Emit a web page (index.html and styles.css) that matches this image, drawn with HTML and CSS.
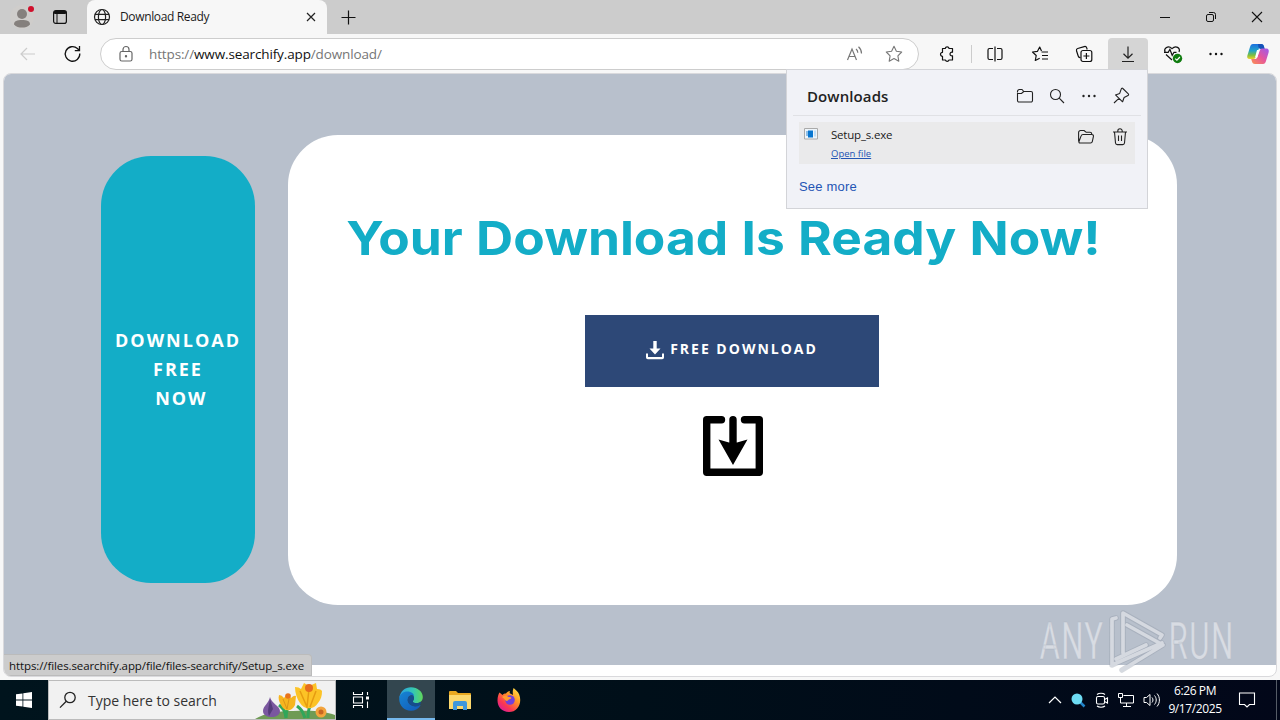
FILE: index.html
```html
<!DOCTYPE html>
<html lang="en">
<head>
<meta charset="utf-8">
<title>Download Ready</title>
<link rel="stylesheet" href="styles.css">
</head>
<body>
<div class="screen">
  <header class="tabstrip">
    <svg class="avatar" width="26" height="26" viewBox="0 0 26 26"><circle cx="13" cy="13" r="12" fill="#cfcdcb"/><circle cx="13" cy="10" r="5" fill="#85807d"/><path d="M5 20.500c0-3.500 3-4.500 8-4.500s8 1 8 4.500c-2 2.500-5 3-8 3s-6-.5-8-3z" fill="#85807d"/><circle cx="22" cy="5" r="3" fill="#d0102c"/></svg>
    <svg class="tabmenu" width="16" height="16" viewBox="0 0 16 16"><rect x="1.600" y="1.600" width="12.800" height="12.800" rx="2.200" fill="none" stroke="#111" stroke-width="1.200"/><path d="M2.500 2.500h11v2h-11zM5 5v9" stroke="#111" fill="#111"/></svg>
    <div class="tab">
      <svg width="18" height="18" viewBox="0 0 18 18" fill="none" stroke="#222" stroke-width="1.200"><circle cx="9" cy="9" r="7.500"/><ellipse cx="9" cy="9" rx="3.600" ry="7.500"/><path d="M2 6.300h14M2 11.700h14"/></svg>
      <span class="tab-title">Download Ready</span>
      <svg class="tab-close" width="10" height="10" viewBox="0 0 10 10" stroke="#222" stroke-width="1.200"><path d="M1 1l8 8M9 1l-8 8"/></svg>
    </div>
    <svg class="newtab" width="16" height="16" viewBox="0 0 16 16" stroke="#111" stroke-width="1.200"><path d="M8.500 1.500v14M1.500 8.500h14"/></svg>
    <div class="window-buttons">
      <svg width="12" height="12" viewBox="0 0 12 12" stroke="#111"><path d="M1 6.500h10"/></svg>
      <svg width="12" height="12" viewBox="0 0 12 12" stroke="#111" fill="none"><rect x="1.500" y="3.500" width="7" height="7" rx="1.500"/><path d="M4 1.500h4.500a2 2 0 0 1 2 2v4.500"/></svg>
      <svg width="12" height="12" viewBox="0 0 12 12" stroke="#111" stroke-width="1.100"><path d="M1 1l10 10M11 1L1 11"/></svg>
    </div>
  </header>

  <nav class="toolbar">
    <span class="tool nav-tool"><svg width="20" height="20" viewBox="0 0 20 20" fill="none" stroke="#ccc" stroke-width="1.200"><path d="M17 10H3M9 4l-6 6 6 6"/></svg></span>
    <span class="tool nav-tool"><svg width="20" height="20" viewBox="0 0 20 20" fill="none" stroke="#111" stroke-width="1.300"><path d="M16.800 9.500a7.300 7.300 0 1 1-2.400-5L16.500 6.500M16.500 2v4.700h-4.700"/></svg></span>
    <div class="address">
      <svg width="16" height="18" viewBox="0 0 16 18" fill="none" stroke="#666" stroke-width="1.200"><rect x="2" y="6.500" width="12" height="9.500" rx="1.800"/><path d="M5 6.500V4.500a3 3 0 0 1 6 0v2"/><circle cx="8" cy="11.200" r=".6" fill="#666"/></svg>
      <span class="url">https://<b>www.searchify.app</b>/download/</span>
      <svg class="read" width="18" height="18" viewBox="0 0 18 18" fill="none" stroke="#777" stroke-width="1.200"><path d="M1.500 15L6 4l4.500 11M3 11.500h6M10 4c1.300 1 1.800 2.300 1.800 3.800M12.500 1.800c2 1.800 3 3.700 3 6.700"/></svg>
      <svg class="star" width="20" height="20" viewBox="0 0 20 20" fill="none" stroke="#777" stroke-width="1.100" stroke-linejoin="round"><path d="M10 2.300l2.400 4.900 5.300.8-3.800 3.800.9 5.400-4.800-2.600-4.800 2.600.9-5.400L2.300 8l5.300-.8z"/></svg>
    </div>
    <span class="tool ext"><svg width="18" height="18" viewBox="0 0 18 18" fill="none" stroke="#111" stroke-width="1.200" stroke-linejoin="round"><path d="M4.500 3.500h2.700a2 2 0 0 1 3.900 0h3.400v3.700a1.900 1.900 0 1 0 0 3.600v4.200h-3.500a1.900 1.900 0 0 1-3.600 0H4.500v-3.700a2 2 0 1 1 0-4z"/></svg></span>
    <i class="divider"></i>
    <span class="tool split"><svg width="18" height="18" viewBox="0 0 18 18" fill="none" stroke="#111" stroke-width="1.200"><path d="M9 1.500v15M7 3.500H3.500A1.500 1.500 0 0 0 2 5v8a1.500 1.500 0 0 0 1.500 1.500H7M11 3.500h3.500A1.500 1.500 0 0 1 16 5v8a1.500 1.500 0 0 1-1.500 1.500H11"/></svg></span>
    <span class="tool fav"><svg width="18" height="18" viewBox="0 0 18 18" fill="none" stroke="#111" stroke-width="1.200" stroke-linejoin="round"><path d="M10.500 6L8.700 2 6.500 6.300l-5 .7 3.700 3.500-.9 5 4.400-2.300M10.500 7h6.500M11 10.500h6M11 14h6"/></svg></span>
    <span class="tool coll"><svg width="18" height="18" viewBox="0 0 18 18" fill="none" stroke="#111" stroke-width="1.200"><path d="M5.500 12.500c-1.200.2-2-.3-2.300-1.500L1.500 5.800C1.200 4.500 1.600 3.800 2.700 3.500l6.500-1.900c1.300-.4 2.100 0 2.500 1.300l.5 1.600"/><rect x="6" y="5.500" width="10.800" height="11" rx="2"/><path d="M11.400 8v6M8.400 11h6"/></svg></span>
    <span class="tool dl active"><svg width="18" height="18" viewBox="0 0 18 18" fill="none" stroke="#222" stroke-width="1.200"><path d="M9 1.500v11.500M4.500 8.800L9 13.200l4.500-4.400M3 16.500h12"/></svg></span>
    <span class="tool heart"><svg width="20" height="20" viewBox="0 0 20 20" fill="none" stroke="#111" stroke-width="1.200"><path d="M2 8C.6 4.500 5 .8 9 4.600 13 .8 17.600 4 16 8M3 10.500l6 5.500M1 8.300h4.200l1.700-3 2.300 6 1.800-3h2.500"/><circle cx="14.500" cy="14.500" r="4.700" fill="#107c10" stroke="none"/><path d="M12.200 14.600l1.700 1.600 3-3.200" stroke="#fff"/></svg></span>
    <span class="tool more"><svg width="16" height="4" viewBox="0 0 16 4" fill="#111"><circle cx="2.500" cy="2" r="1.200"/><circle cx="8" cy="2" r="1.200"/><circle cx="13.500" cy="2" r="1.200"/></svg></span>
    <span class="tool copilot"><svg width="24" height="22" viewBox="0 0 24 22">
      <defs><linearGradient id="ca" x2="0" y2="1"><stop offset="0" stop-color="#1c6fe0"/><stop offset=".45" stop-color="#22a5c8"/><stop offset=".75" stop-color="#7fbf3f"/><stop offset="1" stop-color="#efd12d"/></linearGradient><linearGradient id="cb" x1="1" x2="0" y2="1"><stop offset="0" stop-color="#9a5cf0"/><stop offset=".5" stop-color="#e6569c"/><stop offset="1" stop-color="#fb9150"/></linearGradient></defs>
      <path d="M7 1h8c2 0 2.600 1 3.200 3h-3c-1.600 0-2.200 1-2.700 2.600l-2.300 7c-.5 1.500-1.300 2.400-3 2.400H3.600C1.400 16 .8 14.500 1.400 12.500L4 4c.6-1.900 1.400-3 3-3z" fill="url(#ca)"/>
      <path d="M15 1c2 0 2.600 1 3.200 3l.6 2h-4c-1.300 0-2-.8-2.400-2L12 1z" fill="#1552b8"/>
      <path d="M17 21H9c-2 0-2.600-1-3.200-3l-.6-2h3.600c1.600 0 2.200-1 2.700-2.600l2.300-6C14.300 5.900 15.100 5.500 16.800 5.500h3.600c2.200 0 2.800 2 2.200 4L20 18c-.6 1.900-1.400 3-3 3z" fill="url(#cb)"/><path d="M11 7h2.500l-2.200 7.500H9z" fill="#fff"/></svg></span>
  </nav>

  <main class="viewport">
    <div class="page">
      <aside class="side-cta"><span>DOWNLOAD</span><span>FREE</span><span>&nbsp;NOW</span></aside>
      <section class="card">
        <h1>Your Download Is Ready Now!</h1>
        <div class="button"><svg width="18" height="19" viewBox="0 0 18 19" fill="#fff"><path d="M7.300 0h3.400v7.500h3.800L9 13.500 3.500 7.500h3.800zM0 12.500h2v3.500h14v-3.500h2V16.500a1.800 1.800 0 0 1-1.800 1.800H1.800A1.800 1.800 0 0 1 0 16.500z"/></svg><span>FREE DOWNLOAD</span></div>
        <svg class="box-arrow" width="60" height="60" viewBox="0 0 60 60"><path d="M18.500 3.700H3.700v52.600h52.600V3.700H41.500M30 3.700V30" fill="none" stroke="#000" stroke-width="7.400" stroke-linecap="round" stroke-linejoin="round"/><path d="M15.500 23.500L26 26.500h8l10.500-3L30 49z"/></svg>
      </section>
    </div>
    <div class="status">https://files.searchify.app/file/files-searchify/Setup_s.exe</div>
    <svg class="watermark" width="200" height="70" viewBox="0 0 200 70">
      <g class="wm-text"><text transform="translate(3.500 54) scale(.6 1)" textLength="106" x="0" y="0">ANY</text><text transform="translate(132.500 54) scale(.6 1)" textLength="108" x="0" y="0">RUN</text></g>
      <g fill="none" stroke-linejoin="round" stroke-linecap="round"><path d="M80 13l-4 1v46l50-22M87 48V8l39 22-2 3M91 20l36 20-41 25M80 54l30-14" stroke="#8c95a2" stroke-opacity=".35" stroke-width="5.500"/><path d="M80 13l-4 1v46l50-22M87 48V8l39 22-2 3M91 20l36 20-41 25M80 54l30-14" stroke="#d5d9e0" stroke-width="3.700"/></g>
    </svg>
  </main>

  <section class="downloads">
    <div class="dl-head"><h2>Downloads</h2>
      <svg width="18" height="16" viewBox="0 0 18 16" fill="none" stroke="#222" stroke-width="1.100"><path d="M1.500 4.500V3.300A1.800 1.800 0 0 1 3.300 1.500H6l1.800 2H15a1.500 1.500 0 0 1 1.500 1.500V12.500a1.500 1.500 0 0 1-1.500 1.500H3a1.500 1.500 0 0 1-1.500-1.500V5.500H5.500l2.300-2"/></svg>
      <svg width="18" height="18" viewBox="0 0 18 18" fill="none" stroke="#222" stroke-width="1.100"><circle cx="7.500" cy="7.500" r="5"/><path d="M11.200 11.200l4.800 4.800"/></svg>
      <svg width="18" height="4" viewBox="0 0 18 4" fill="#222"><circle cx="3.500" cy="2" r="1.200"/><circle cx="9" cy="2" r="1.200"/><circle cx="14.500" cy="2" r="1.200"/></svg>
      <svg width="18" height="18" viewBox="0 0 18 18" fill="none" stroke="#222" stroke-width="1.100" stroke-linejoin="round"><path d="M10.800 1.500l5.500 5.300c.6.6.4 1.400-.3 1.700l-3.900 2-1.500 4.300L3.500 7.900l4.200-1.500 1.600-4.500c.3-.8 1-1 1.500-.4zM6.900 11.300L2 16"/></svg>
    </div>
    <div class="dl-item">
      <svg class="exe" width="14" height="12" viewBox="0 0 14 12"><path d="M.5.5h13v10.500H.5z" fill="#eef5fb" stroke="#aaa"/><path d="M2 3h2.500v5H2z" fill="#8ebfe8"/><path d="M4 2.500h5v7H4z" fill="#0876d0"/><path d="M10 2.500h2v6h-2z" fill="#c2dff5"/></svg>
      <div class="dl-text"><span class="fname">Setup_s.exe</span><a>Open file</a></div>
      <svg width="18" height="16" viewBox="0 0 18 16" fill="none" stroke="#222" stroke-width="1.100" stroke-linejoin="round"><path d="M14.700 5.500V4.900a1.700 1.700 0 0 0-1.700-1.700H9L7 1.500H3.500A1.900 1.900 0 0 0 1.600 3.400V12.500M3 14h10.500c.9 0 1.600-.5 1.800-1.400l1.100-5c.3-1.300-.3-2.100-1.500-2.100H6c-1 0-1.600.5-1.900 1.400L2 12.500c-.2.900.1 1.500 1 1.500z"/></svg>
      <svg width="18" height="18" viewBox="0 0 18 18" fill="none" stroke="#222" stroke-width="1.100"><path d="M2 4h14M6.800 4V3a2.200 2.200 0 0 1 4.400 0v1M3.500 4l1 11a1.800 1.800 0 0 0 1.800 1.600h5.400a1.800 1.800 0 0 0 1.800-1.600l1-11M7.500 7.500v5.500M10.500 7.500v5.500"/></svg>
    </div>
    <a class="see">See more</a>
  </section>

  <footer class="taskbar">
    <span class="start"><svg width="16" height="16" viewBox="0 0 16 16" fill="#fff"><path d="M0 2.300l6.500-.9v6.200H0zM7.300 1.300L16 0v7.600H7.300zM0 8.400h6.500v6.200L0 13.700zM7.300 8.400H16V16l-8.700-1.300z"/></svg></span>
    <div class="search">
      <svg width="18" height="18" viewBox="0 0 18 18" fill="none" stroke="#222" stroke-width="1.300"><circle cx="11" cy="6.500" r="5.200"/><path d="M7.300 10.300L1 16.600"/></svg>
      <span>Type here to search</span>
      <svg class="flowers" width="80" height="38" viewBox="0 0 80 38"><path d="M0 38c10-6 22-8 38-8 20-1 32 0 42 4v4z" fill="#6f9b55"/><path d="M31 37c-1-8-3-10-7-13M31 37c0-8 2-12 6-14M53 37c0-10 2-12 7-18M50 37c-3-8-4-9-8-12" stroke="#30a65a" stroke-width="3" fill="none"/><path d="M15 16c1 6 10 9 10 14 0 8-17 8-17 0 0-5 6-8 7-14z" fill="#7a579f"/><path d="M15 18c-1 7-3 12-1 17l4-7z" fill="#543b7a"/><path d="M24 14q3 0 5 3l3-4 4 4q3-3 5-2l-1 9c-3 7-11 7-14 0-2-3-3-7-2-10z" fill="#f7b51f"/><path d="M28 18l4 10 2-10" stroke="#dc9418" fill="none"/><circle cx="33" cy="15" r="2.800" fill="#e9741b"/><path d="M40 6q4 0 6 2l3-6 5 3 7-3 1 6q4 0 5 2c0 5-1 8-4 12-4 7-14 7-18 0-3-4-5-10-5-16z" fill="#fcc326"/><path d="M45 10l7 16 2-18M61 10l-6 16" stroke="#e69c11" stroke-width="1.500" fill="none"/><circle cx="54" cy="7" r="4" fill="#e66d1d"/><circle cx="66" cy="31" r="5.500" fill="#f3a43c"/><circle cx="66" cy="31" r="2.500" fill="#c86622"/></svg>
    </div>
    <span class="task"><svg width="18" height="18" viewBox="0 0 18 18" fill="none" stroke="#fff" stroke-width="1.100"><path d="M1.500 1v2.500h9V1M1.500 17v-2.500h9V17M1.500 6h9v6h-9zM15.500 1v3M15.500 10.500V17"/><path d="M14 5.500h3v3h-3z" fill="#fff" stroke="none"/></svg></span>
    <span class="task current"><svg width="24" height="24" viewBox="0 0 24 24"><defs><linearGradient id="eg"><stop stop-color="#2a9fe6"/><stop offset=".6" stop-color="#35c8b2"/><stop offset="1" stop-color="#61d75a"/></linearGradient><linearGradient id="eb" x2="1" y2="1"><stop stop-color="#1685d3"/><stop offset="1" stop-color="#1359b8"/></linearGradient></defs><path d="M.3 11C1.300 4 6.200.2 12 .2c6.600 0 11.800 4.500 11.800 9.800 0 4-3 6.200-6 6.200-2.300 0-4-.8-4-1.700 0-.8 1.200-1.200 1.200-3.300 0-3-3-5-7-5-3.200 0-6 1.600-7.700 4.800z" fill="url(#eg)"/><path d="M.2 12c0-5 4.500-7.500 8-7.500 4.500 0 6.800 2.800 6.800 4.500-4-2-6.300.7-6.300 4 0 4 5.300 8 11.600 5.200.8-.3 1.400-.3 1 .5C19 22 16 23.800 12 23.800 5 23.800.2 18.500.2 12z" fill="url(#eb)"/><path d="M8.700 13c0-3 2-5 5-4.500 1 .7 1.300 1.700 1.300 2.500 0 2-1.200 2.500-1.200 3.400 0 1 1.700 1.700 4 1.700 1.500 0 3-.5 4-1.300l.2 1.500-2 2.500C14 21 8.700 17 8.700 13z" fill="#164d8c"/></svg></span>
    <span class="task"><svg width="22" height="19" viewBox="0 0 22 19"><path d="M0 1a1 1 0 0 1 1-1h6l2 2h12a1 1 0 0 1 1 1v15H0z" fill="#e9a820"/><path d="M0 4h22v14H0z" fill="#fcd86d"/><path d="M4 19v-7a2 2 0 0 1 2-2h10a2 2 0 0 1 2 2v7h-4v-4H8v4z" fill="#3f97db"/></svg></span>
    <span class="task"><svg width="24" height="24" viewBox="0 0 24 24"><defs><linearGradient id="ff" x1="1" x2=".2" y2="1"><stop stop-color="#fff04c"/><stop offset=".4" stop-color="#ff9926"/><stop offset=".75" stop-color="#fb3752"/><stop offset="1" stop-color="#d91aa0"/></linearGradient></defs><path d="M2.500 4.500L5.500 7c1-1 2-1.400 3.500-1.400C10 4 11.500 3.200 13 3c-.5 1-.6 2 .2 2.600L16 7c-.5-3-.3-5 .6-7 2.200 2 4.500 3.700 5.600 6.500C25.500 15 20.500 24 12 24 5 24 .5 19 .5 12.500c0-3.500.8-6 2-8z" fill="url(#ff)"/><circle cx="13" cy="12" r="4.800" fill="#7140dc"/><path d="M5 9c2-2 4.500-2 6.500 0 2 0 3.500.3 2.500 1.500-1 .8-2.500.8-3 2-1.500 1-3 0-3.500-1.500z" fill="#ff9a2f"/></svg></span>
    <div class="tray">
      <svg width="14" height="14" viewBox="0 0 14 14" fill="none" stroke="#fff" stroke-width="1.200"><path d="M1 10l6-6 6 6"/></svg>
      <svg width="16" height="16" viewBox="0 0 16 16"><path d="M10 10l4.500 4.500" stroke="#2385c9" stroke-width="2.500"/><circle cx="7" cy="7" r="5.500" fill="#6edcf4"/></svg>
      <svg width="14" height="16" viewBox="0 0 14 16" fill="none" stroke="#fff" stroke-width="1.100"><rect x="1.500" y="4.500" width="8" height="7.500" rx="1.500"/><path d="M9.500 7.500l3-1.500v5l-3-1.500M2 2.500c2-1.700 6-1.700 8 0M2 14c2 1.700 6 1.700 8 0"/></svg>
      <svg width="18" height="16" viewBox="0 0 18 16" fill="none" stroke="#fff"><path d="M6.500 3.500h10v7.500h-13V7.500M9.500 11v3M6 14.500h8M1.500 1.500h4v4h-4zM3.500 5.500v4"/></svg>
      <svg width="18" height="16" viewBox="0 0 18 16" fill="none" stroke="#fff"><path d="M1 5.500h2.500L7 2.500v11l-3.500-3H1zM9 5.500c1.300 1.500 1.300 3.500 0 5M11.500 3.500c2.300 2.600 2.300 6.400 0 9M14 1.500c3.200 3.600 3.200 9.400 0 13"/></svg>
    </div>
    <div class="clock"><span>6:26 PM</span><span>9/17/2025</span></div>
    <svg class="notice" width="18" height="18" viewBox="0 0 18 18" fill="none" stroke="#fff" stroke-width="1.100"><path d="M1.500 2h15v11.500h-5L9 16l-2.500-2.500h-5z"/></svg>
    <i class="show-desktop"></i>
  </footer>
</div>
</body>
</html>
```
FILE: styles.css
```css
* { box-sizing: border-box; }
body { margin: 0; font-family: "Open Sans", "Noto Sans", sans-serif; color: #1b1b1b; }
svg { display: block; flex: none; }
.screen { position: relative; width: 1280px; height: 720px; overflow: hidden; background: #f7f7f7; display: flex; flex-direction: column; }

.tabstrip { height: 34px; background: #ccc; display: flex; align-items: center; }
.avatar { margin-left: 9px; }
.tabmenu { margin-left: 17px; }
.tab { align-self: stretch; width: 240px; margin-left: 19px; background: #f7f7f7; border-radius: 8px 8px 0 0; display: flex; align-items: center; padding: 0 11px 0 6px; }
.tab-title { margin-left: 9px; font-size: 12px; line-height: 16px; margin-bottom: 1px; letter-spacing: -.36px; white-space: nowrap; }
.tab-close { margin-left: auto; }
.newtab { margin-left: 13px; }
.window-buttons { margin-left: auto; margin-right: 17px; display: flex; gap: 34px; }

.toolbar { height: 39px; display: flex; align-items: flex-start; padding: 4px 2px 0 5px; }
.tool { width: 40px; height: 32px; display: flex; align-items: center; justify-content: center; flex: none; }
.nav-tool { width: 45px; }
.address { width: 819px; height: 32px; margin-left: 5px; background: #fff; border: 1px solid #cdcdcd; border-radius: 16px; display: flex; align-items: center; padding: 0 14px 0 17px; flex: none; }
.url { margin-left: 15px; font-size: 13.500px; letter-spacing: -.13px; color: #767676; white-space: nowrap; }
.url b { font-weight: 400; color: #111; }
.read { margin-left: auto; margin-right: 20px; }
.ext { margin-left: 8px; }
.divider { width: 1px; height: 18px; margin: 7px 3px 0 4px; background: #ccc; }
.fav { margin-left: 5px; }
.coll, .dl { margin-left: 4px; }
.active { background: #d5d5d5; border-radius: 4px 4px 0 0; }
.heart { margin-left: 5px; }
.more { margin-left: 3px; }
.copilot { margin-left: 2px; }

.viewport { position: relative; width: 1274px; height: 604px; margin-left: 3px; background: #fff; border: 1px solid #d9d9dc; border-radius: 8px; overflow: hidden; flex: none; }
.page { height: 591px; background: #b8c0cc; display: flex; align-items: flex-start; padding-left: 97px; }
.side-cta { width: 154px; height: 427px; margin-top: 82px; background: #13adc7; border-radius: 50px; display: flex; flex-direction: column; align-items: center; justify-content: center; color: #fff; font-size: 18px; font-weight: 700; line-height: 29px; letter-spacing: 2px; white-space: nowrap; }
.card { width: 889px; height: 470px; margin: 61px 0 0 33px; background: #fff; border-radius: 50px; display: flex; flex-direction: column; align-items: center; }
h1 { margin: 73px 17px 0 0; font: 700 47px/60px Inter, "Open Sans", sans-serif; letter-spacing: 0; word-spacing: 1px; color: #13adc7; white-space: nowrap; transform: scaleX(1.095); }
.button { width: 294px; height: 72px; margin: 47px 1px 0 0; background: #2d4877; display: flex; justify-content: center; padding-top: 26px; gap: 6px; color: #fff; font-size: 14px; font-weight: 700; line-height: 16px; letter-spacing: 2px; white-space: nowrap; }
.box-arrow { margin: 29px 0 0 1px; }
.status { position: absolute; left: 0; bottom: 0; width: 308px; height: 22px; background: #ccc; border: 1px solid #bbb; border-left: 0; border-radius: 0 4px 0 0; padding-left: 5px; font-size: 11.500px; letter-spacing: -.1px; line-height: 21px; color: #111; white-space: nowrap; }
.watermark { position: absolute; left: 1032px; top: 531px; }
.wm-text { font: 400 52px Roboto, sans-serif; fill: #d8dce3; stroke: #a8b0bd; stroke-opacity: .4; stroke-width: .8; }

.downloads { position: absolute; left: 786px; top: 69px; width: 362px; height: 140px; background: #f1f2f7; border: 1px solid #d3d4d8; display: flex; flex-direction: column; }
.dl-head { height: 46px; margin: 0 6px; border-bottom: 1px solid #e0e1e5; padding: 7px 11px 0 14px; display: flex; align-items: center; gap: 14px; }
h2 { margin: 0 auto 0 0; font-size: 15px; font-weight: 600; letter-spacing: .1px; color: #222; }
.dl-item { height: 42px; margin: 6px 12px 0; background: #eaeaeb; display: flex; padding: 6px 6px 0 5px; }
.dl-text { margin-left: 13px; margin-right: auto; display: flex; flex-direction: column; }
.fname { font-size: 11.500px; line-height: 14px; letter-spacing: -.2px; }
.dl-text a { font-size: 9.500px; line-height: 12px; margin-top: 6px; color: #2455b4; text-decoration: underline; }
.dl-item > svg:nth-of-type(2) { margin: 1px 16px 0 0; }
.see { margin: 14px 0 0 12px; font: 13px/18px "Liberation Sans", sans-serif; letter-spacing: .2px; color: #2455b4; }

.taskbar { height: 40px; margin-top: 3px; background: linear-gradient(90deg, #00141d, #000f19 50%, #020719); display: flex; align-items: center; color: #fff; flex: none; }
.start { width: 48px; display: flex; justify-content: center; }
.search { position: relative; width: 288px; height: 40px; background: #f1f1f1; border: 1px solid #bbb; display: flex; align-items: center; padding-left: 10px; color: #333; font-size: 14px; white-space: nowrap; }
.search span { margin-left: 11px; }
.flowers { position: absolute; right: 0; top: 0; }
.task { width: 49px; height: 40px; display: flex; align-items: center; justify-content: center; }
.current { width: 48px; margin-left: 2px; background: #33464f; border-bottom: 2px solid #76b9ed; }
.tray { margin-left: auto; width: 113px; display: flex; align-items: center; justify-content: space-between; }
.clock { width: 54px; margin-left: 7px; display: flex; flex-direction: column; align-items: center; font-size: 12px; line-height: 18px; letter-spacing: -.4px; white-space: nowrap; }
.notice { margin: 0 20px 0 16px; }
.show-desktop { width: 4px; height: 40px; border-left: 1px solid #555c66; }
```
